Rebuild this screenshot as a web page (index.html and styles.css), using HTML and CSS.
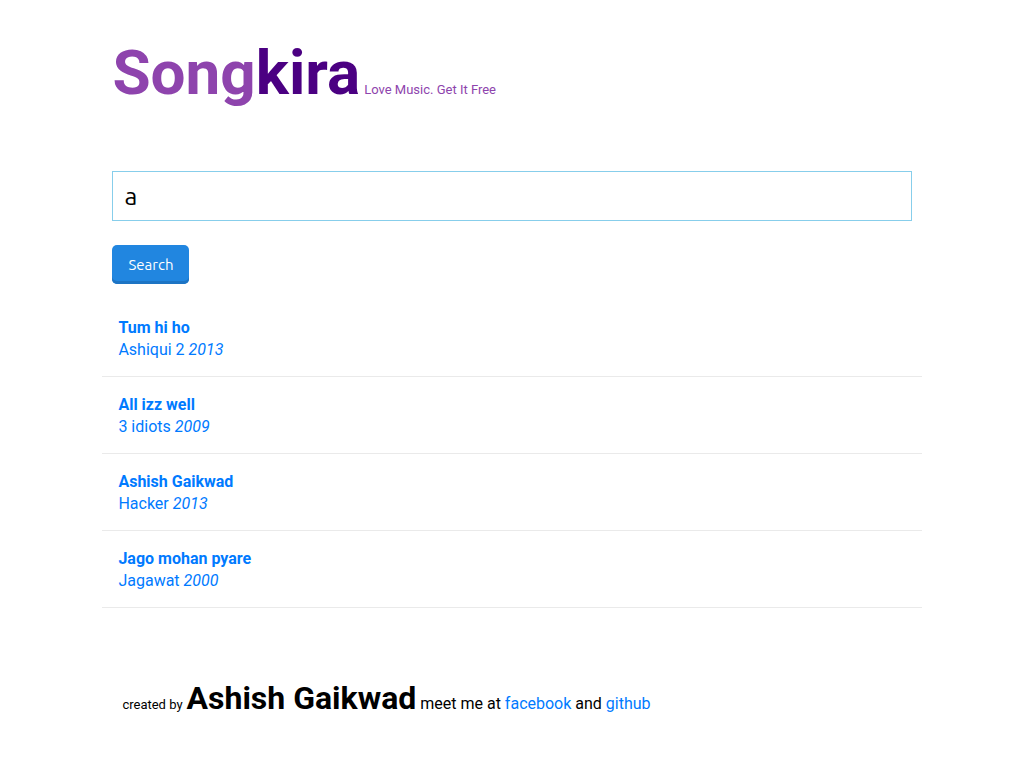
FILE: index.html
```html
<!DOCTYPE html>
<html lang="en">
<head>
  <meta charset="UTF-8">
  <meta name="viewport" content="width=device-width, initial-scale=1.0">
  <title>Songkira</title>
  <link rel="stylesheet" href="styles.css">
</head>
<body>
  <div class="container">
    <header class="header">
      <h1 class="logo">Song<span class="logo-dark">kira</span></h1>
      <span class="tagline">Love Music. Get It Free</span>
    </header>

    <form class="search">
      <input type="text" class="search-input" name="q" value="a" aria-label="Search songs">
      <button type="submit" class="search-button">Search</button>
    </form>

    <ul class="results">
      <li><a href="#"><b>Tum hi ho</b><br>Ashiqui 2 <i>2013</i></a></li>
      <li><a href="#"><b>All izz well</b><br>3 idiots <i>2009</i></a></li>
      <li><a href="#"><b>Ashish Gaikwad</b><br>Hacker <i>2013</i></a></li>
      <li><a href="#"><b>Jago mohan pyare</b><br>Jagawat <i>2000</i></a></li>
    </ul>

    <footer class="footer">
      <small>created by</small> <strong class="author">Ashish Gaikwad</strong>
      meet me at <a href="#">facebook</a> and <a href="#">github</a>
    </footer>
  </div>
</body>
</html>
```

FILE: styles.css
```css
* {
  box-sizing: border-box;
}

body {
  margin: 0;
  background: #fff;
  color: #000;
  font-family: Roboto, sans-serif;
  font-size: 16px;
  line-height: 22px;
}

a {
  color: #007aff;
  text-decoration: none;
}

.container {
  width: 80%;
  max-width: 1200px;
  margin: 0 auto;
  padding: 35px 0;
}

.header {
  padding: 0 10px;
  color: #8e44ad;
}

.logo {
  display: inline;
  font-size: 62px;
  line-height: 75px;
}

.logo-dark {
  color: indigo;
}

.tagline {
  font-size: 13px;
}

.search {
  padding: 61px 10px 0;
}

.search-input {
  display: block;
  width: 100%;
  height: 50px;
  padding: 0 11px;
  border: 1px solid skyblue;
  font-family: Ubuntu, "Noto Sans", sans-serif;
  font-size: 25px;
  outline: none;
}

.search-button {
  height: 39px;
  margin-top: 24px;
  padding: 0 16px;
  border: 0;
  border-radius: 5px;
  background: #2186e0;
  box-shadow: inset 0 -3px 0 #1d74c4;
  color: #fff;
  font-family: Ubuntu, "Noto Sans", sans-serif;
  font-size: 15px;
  cursor: pointer;
}

.results {
  margin: 16px 0 0;
  padding: 0;
  list-style: none;
}

.results a {
  display: block;
  padding: 17px 16px 15px;
  border-bottom: 1px solid #eaeaea;
}

.footer {
  margin-top: 79px;
  padding: 0 20px;
}

.footer small {
  font-size: 13px;
}

.author {
  font-size: 32px;
}
```
